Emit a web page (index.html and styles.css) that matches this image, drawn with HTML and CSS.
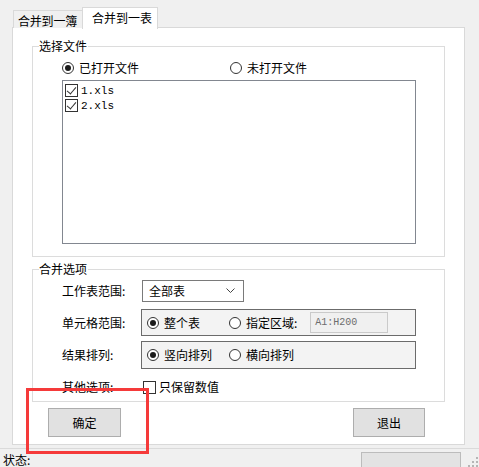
FILE: index.html
```html
<!DOCTYPE html>
<html lang="zh-CN">

<head>
    <meta charset="UTF-8">
    <title>合并</title>
    <link rel="stylesheet" href="styles.css">
</head>

<body>
    <div class="window">
        <div class="tabs">
            <div class="tab">合并到一簿</div>
            <div class="tab active">合并到一表</div>
        </div>
        <div class="panel">
            <div class="group files">
                <span class="group-title">选择文件</span>
                <div class="radio-row">
                    <label class="radio wide"><span class="dot checked"></span>已打开文件</label>
                    <label class="radio"><span class="dot"></span>未打开文件</label>
                </div>
                <div class="list">
                    <div class="item"><span class="check on"></span>1.xls</div>
                    <div class="item"><span class="check on"></span>2.xls</div>
                </div>
            </div>

            <div class="group options">
                <span class="group-title">合并选项</span>
                <div class="row r1">
                    <span class="lbl">工作表范围:</span>
                    <div class="select">
                        <span>全部表</span>
                        <svg width="9" height="6" viewBox="0 0 9 6"><path d="M0.5 0.5 L4.5 4.5 L8.5 0.5" fill="none" stroke="#444" stroke-width="1"/></svg>
                    </div>
                </div>
                <div class="row r2">
                    <span class="lbl">单元格范围:</span>
                    <div class="box">
                        <label class="radio w82"><span class="dot checked"></span>整个表</label>
                        <label class="radio"><span class="dot"></span>指定区域:</label>
                        <div class="field">A1:H200</div>
                    </div>
                </div>
                <div class="row r3">
                    <span class="lbl">结果排列:</span>
                    <div class="box tall">
                        <label class="radio w82"><span class="dot checked"></span>竖向排列</label>
                        <label class="radio"><span class="dot"></span>横向排列</label>
                    </div>
                </div>
                <div class="row r4">
                    <span class="lbl">其他选项:</span>
                    <label class="chk"><span class="check"></span>只保留数值</label>
                </div>
            </div>

            <div class="buttons">
                <div class="btn ok">确定</div>
                <div class="btn">退出</div>
            </div>
        </div>
        <div class="status">
            <span class="status-text">状态:</span>
            <div class="status-box"></div>
            <svg class="grip" width="10" height="10" viewBox="0 0 10 10">
                <rect x="8" y="0" width="2" height="2" fill="#b5b5b5"/>
                <rect x="4" y="4" width="2" height="2" fill="#b5b5b5"/>
                <rect x="8" y="4" width="2" height="2" fill="#b5b5b5"/>
                <rect x="0" y="8" width="2" height="2" fill="#b5b5b5"/>
                <rect x="4" y="8" width="2" height="2" fill="#b5b5b5"/>
                <rect x="8" y="8" width="2" height="2" fill="#b5b5b5"/>
            </svg>
        </div>
        <div class="mark"></div>
    </div>
</body>

</html>
```

FILE: styles.css
```css
* {
    box-sizing: border-box;
}

html,
body {
    margin: 0;
    height: 100%;
}

body {
    background-color: #f0f0f0;
    font-family: "Noto Sans CJK SC", "Microsoft YaHei", sans-serif;
    font-size: 12px;
    line-height: 14px;
    color: #000;
    overflow: hidden;
}

.window {
    position: relative;
    width: 479px;
    height: 467px;
    padding: 7px 0 0 12px;
}

/* tabs */
.tabs {
    display: flex;
    align-items: flex-end;
    margin-left: 1px;
    height: 21px;
}

.tab {
    width: 70px;
    height: 18px;
    padding: 3px 0 0 4px;
    border: 1px solid #d9d9d9;
    border-bottom: none;
    background-color: #f0f0f0;
    white-space: nowrap;
    letter-spacing: -0.2px;
}

.tab.active {
    position: relative;
    z-index: 1;
    width: 76px;
    height: 22px;
    margin-bottom: -1px;
    margin-left: -1px;
    padding: 3px 0 0 9px;
    background-color: #fff;
    letter-spacing: 0;
}

.panel {
    width: 453px;
    height: 418px;
    margin-top: -1px;
    background-color: #fff;
    border: 1px solid #d9d9d9;
    padding: 18px 0 0 19px;
}

/* group boxes */
.group {
    position: relative;
    width: 413px;
    border: 1px solid #dcdcdc;
}

.group-title {
    position: absolute;
    top: -8px;
    left: 6px;
    padding: 0 1px 0 0;
    background-color: #fff;
}

.files {
    height: 211px;
    padding: 14px 0 0 29px;
}

.options {
    height: 133px;
    margin-top: 12px;
    padding: 10px 0 0 29px;
}

.radio-row {
    display: flex;
    height: 14px;
}

.radio {
    display: flex;
    align-items: center;
    white-space: nowrap;
}

.radio.wide {
    width: 168px;
}

.radio.w82 {
    width: 82px;
}

.dot {
    position: relative;
    width: 12px;
    height: 12px;
    border: 1px solid #333;
    border-radius: 50%;
    background-color: #fff;
    margin-right: 5px;
}

.dot.checked::after {
    content: "";
    position: absolute;
    left: 2px;
    top: 2px;
    width: 6px;
    height: 6px;
    border-radius: 50%;
    background-color: #1b1b1b;
}

.list {
    width: 354px;
    height: 164px;
    margin-top: 5px;
    border: 1px solid #828790;
    padding: 2px 0 0 2px;
}

.item {
    display: flex;
    align-items: center;
    height: 15px;
    font-family: "Liberation Mono", "DejaVu Sans Mono", monospace;
    font-size: 11px;
}

.check {
    position: relative;
    display: inline-block;
    width: 13px;
    height: 13px;
    border: 1px solid #333;
    background-color: #fff;
    margin-right: 3px;
}

.check.on::after {
    content: "";
    position: absolute;
    left: 3px;
    top: 0px;
    width: 4px;
    height: 8px;
    border-right: 1px solid #333;
    border-bottom: 1px solid #333;
    transform: rotate(40deg);
}

/* option rows */
.row {
    display: flex;
    align-items: center;
}

.lbl {
    width: 79px;
    flex-shrink: 0;
}

.r1 {
    height: 22px;
}

.r2 {
    margin-top: 7px;
}

.r3 {
    margin-top: 5px;
}

.r4 {
    margin-top: 10px;
    height: 16px;
}

.select {
    display: flex;
    justify-content: space-between;
    align-items: center;
    width: 102px;
    height: 22px;
    margin-left: 1px;
    border: 1px solid #7a7a7a;
    background-color: #fff;
    padding: 0 8px 0 6px;
}

.box {
    display: flex;
    align-items: center;
    width: 275px;
    height: 27px;
    border: 1px solid #6b6b6b;
    background-color: #f3f3f3;
    padding-left: 5px;
}

.box.tall {
    height: 28px;
}

.field {
    width: 78px;
    height: 21px;
    margin-left: 13px;
    border: 1px solid #cacaca;
    background-color: #f0f0f0;
    color: #6d6d6d;
    font-family: "Liberation Mono", "DejaVu Sans Mono", monospace;
    font-size: 10px;
    line-height: 19px;
    padding-left: 4px;
}

.chk {
    display: flex;
    align-items: center;
    margin-left: 2px;
}

/* buttons */
.buttons {
    display: flex;
    justify-content: space-between;
    width: 413px;
    margin-top: 6px;
    padding: 0 20px 0 16px;
}

.btn {
    width: 72px;
    height: 29px;
    border: 1px solid #adadad;
    background-color: #e1e1e1;
    text-align: center;
    line-height: 27px;
}

.btn.ok {
    width: 73px;
}

/* status bar */
.status {
    display: flex;
    align-items: flex-end;
    margin: 3px 0 0 -12px;
    height: 20px;
    border-top: 1px solid #dadada;
}

.status-text {
    margin: 0 0 1px 3px;
    width: 358px;
    line-height: 14px;
}

.status-box {
    width: 100px;
    height: 16px;
    border: 1px solid #bcbcbc;
    border-bottom: none;
    background-color: #e3e3e3;
}

.grip {
    margin-left: 7px;
    margin-bottom: 1px;
}

/* red highlight drawn on top */
.mark {
    position: absolute;
    left: 26px;
    top: 388px;
    width: 123px;
    height: 66px;
    border: 3px solid #f53a3a;
}
```
